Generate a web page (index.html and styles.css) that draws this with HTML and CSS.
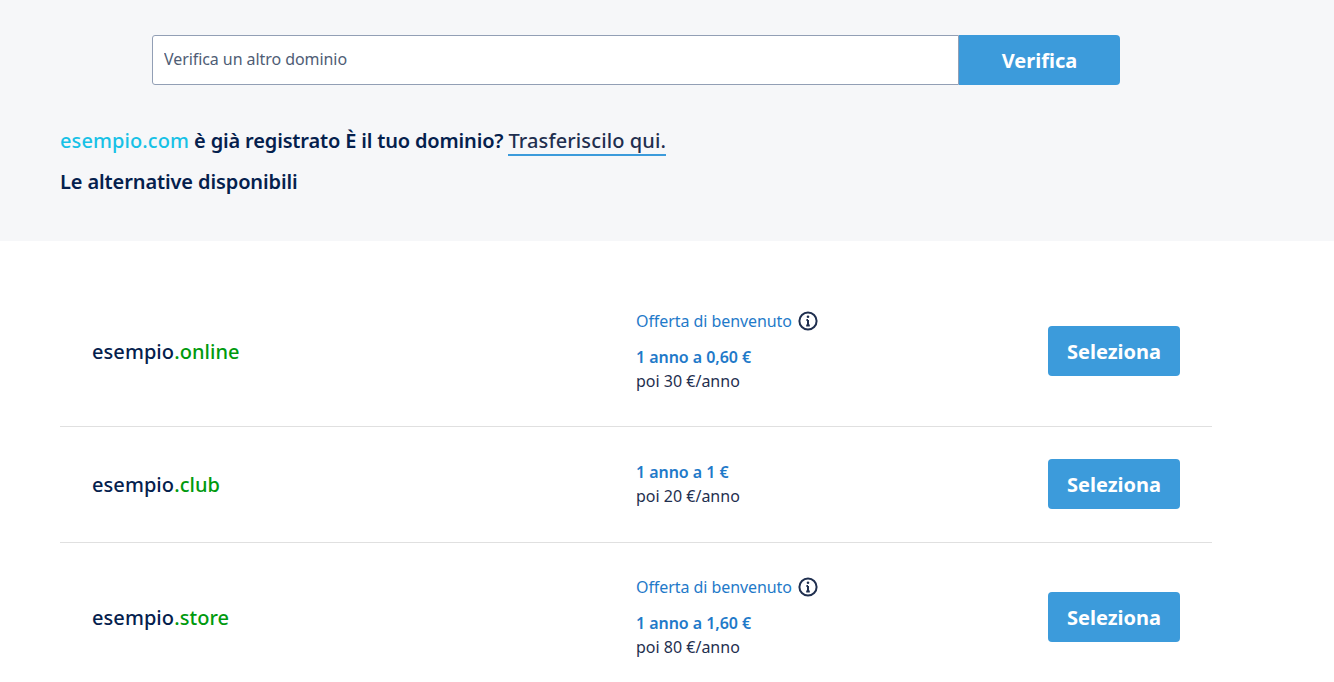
FILE: index.html
```html
<!DOCTYPE html>
<html lang="it">
<head>
<meta charset="utf-8">
<title>Verifica dominio</title>
<link rel="stylesheet" href="styles.css">
</head>
<body>
<header class="top">
  <form class="search">
    <input class="search-input" type="text" placeholder="Verifica un altro dominio">
    <button class="btn search-btn" type="button">Verifica</button>
  </form>
  <p class="status"><span class="taken">esempio.com</span> è già registrato È il tuo dominio? <a class="transfer" href="#">Trasferiscilo qui.</a></p>
  <h2 class="alt-title">Le alternative disponibili</h2>
</header>
<main class="list">
  <section class="row">
    <div class="domain">esempio<span class="tld">.online</span></div>
    <div class="info">
      <div class="offer">Offerta di benvenuto
        <svg class="info-icon" viewBox="0 0 20 20" aria-hidden="true"><circle cx="10" cy="10" r="8.6"/><path d="M10 9v5.5M8.2 14.5h3.6M8.4 9H10"/><circle class="dot" cx="10" cy="5.8" r="1.3"/></svg>
      </div>
      <div class="price">1 anno a 0,60 €</div>
      <div class="renew">poi 30 €/anno</div>
    </div>
    <button class="btn select" type="button">Seleziona</button>
  </section>
  <section class="row">
    <div class="domain">esempio<span class="tld">.club</span></div>
    <div class="info">
      <div class="price">1 anno a 1 €</div>
      <div class="renew">poi 20 €/anno</div>
    </div>
    <button class="btn select" type="button">Seleziona</button>
  </section>
  <section class="row">
    <div class="domain">esempio<span class="tld">.store</span></div>
    <div class="info">
      <div class="offer">Offerta di benvenuto
        <svg class="info-icon" viewBox="0 0 20 20" aria-hidden="true"><circle cx="10" cy="10" r="8.6"/><path d="M10 9v5.5M8.2 14.5h3.6M8.4 9H10"/><circle class="dot" cx="10" cy="5.8" r="1.3"/></svg>
      </div>
      <div class="price">1 anno a 1,60 €</div>
      <div class="renew">poi 80 €/anno</div>
    </div>
    <button class="btn select" type="button">Seleziona</button>
  </section>
</main>
</body>
</html>
```
FILE: styles.css
```css
* { box-sizing: border-box; }
html, body { margin: 0; height: 682px; overflow: hidden; background: #fff; }
body { font-family: "Noto Sans", "Open Sans", sans-serif; color: #04204d; font-size: 16px; }
.top { background: #f6f7f9; height: 241px; padding: 35px 60px 0; }
.search { display: flex; width: 968px; margin: 0 0 0 92px; height: 50px; }
.search-input { flex: 1; min-width: 0; height: 50px; padding: 0 11px 2px; border: 1px solid #929fb5; border-radius: 3px 0 0 3px; background: #fff; font: 16px "Noto Sans", "Open Sans", sans-serif; letter-spacing: -0.07px; color: #4a5a75; outline: 0; }
.search-input::placeholder { color: #4f5d75; opacity: 1; }
.btn { border: 0; background: #3c9bdb; color: #fff; border-radius: 4px; font: 700 20px/1 "Noto Sans", "Open Sans", sans-serif; padding: 2px 0 0; }
.search-btn { width: 161px; height: 50px; border-radius: 0 4px 4px 0; }
.status { margin: 42px 0 0; height: 29px; font-size: 20px; line-height: 28px; font-weight: 600; letter-spacing: -0.16px; color: #04204d; }
.taken { color: #17c1e6; font-weight: 500; letter-spacing: 0.09px; }
.transfer { color: #1f2f4f; font-weight: 500; letter-spacing: 0.12px; text-decoration: none; border-bottom: 2px solid #3c9bdb; }
.alt-title { margin: 12px 0 0; font-size: 20px; line-height: 28px; font-weight: 600; letter-spacing: -0.115px; color: #04204d; }
.list { width: 1152px; margin-left: 60px; padding-top: 36px; }
.row { display: flex; align-items: center; padding: 32px 32px 33px; border-bottom: 1px solid #e0e0e0; }
.row:last-child { border-bottom: 0; }
.domain { width: 544px; padding-top: 2px; font-size: 20px; line-height: 28px; font-weight: 500; letter-spacing: 0.07px; color: #04204d; }
.tld { color: #009a0e; }
.info { flex: 1; line-height: 24px; }
.offer { display: flex; align-items: center; gap: 6px; height: 24px; margin-bottom: 12px; letter-spacing: -0.07px; color: #1f7ac9; }
.info-icon { width: 20px; height: 20px; fill: none; stroke: #1f2f4f; stroke-width: 2; }
.info-icon .dot { fill: #1f2f4f; stroke: none; }
.price { font-weight: 600; letter-spacing: -0.05px; color: #1f7ac9; }
.renew { color: #1f2f4f; }
.select { width: 132px; height: 50px; flex: none; }
```
